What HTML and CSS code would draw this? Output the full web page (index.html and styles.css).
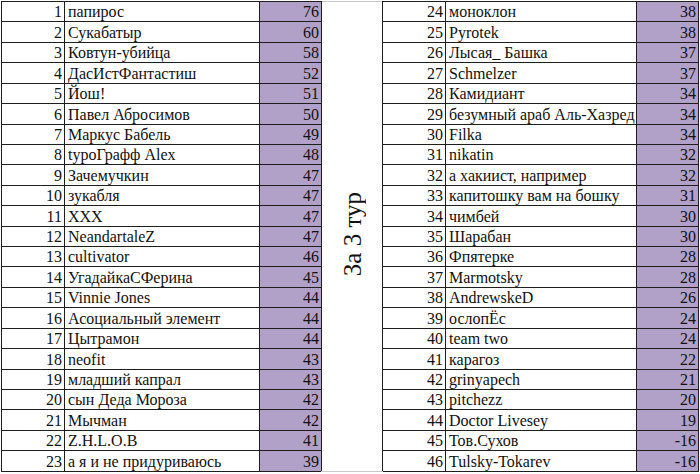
FILE: index.html
```html
<!DOCTYPE html>
<html lang="ru">
<head>
<meta charset="utf-8">
<link rel="stylesheet" href="styles.css">
</head>
<body>
<div class="sheet">
<table class="grid">
<colgroup>
<col class="c-num"><col class="c-name-l"><col class="c-score">
<col class="c-mid">
<col class="c-num"><col class="c-name-r"><col class="c-score">
</colgroup>
<tbody>
<tr><td class="num">1</td><td class="name">папирос</td><td class="score">76</td><td class="mid" rowspan="23"><span class="mid-text">За 3 тур</span></td><td class="num">24</td><td class="name">моноклон</td><td class="score">38</td></tr>
<tr><td class="num">2</td><td class="name">Сукабатыр</td><td class="score">60</td><td class="num">25</td><td class="name">Pyrotek</td><td class="score">38</td></tr>
<tr><td class="num">3</td><td class="name">Ковтун-убийца</td><td class="score">58</td><td class="num">26</td><td class="name">Лысая_ Башка</td><td class="score">37</td></tr>
<tr><td class="num">4</td><td class="name">ДасИстФантастиш</td><td class="score">52</td><td class="num">27</td><td class="name">Schmelzer</td><td class="score">37</td></tr>
<tr><td class="num">5</td><td class="name">Йош!</td><td class="score">51</td><td class="num">28</td><td class="name">Камидиант</td><td class="score">34</td></tr>
<tr><td class="num">6</td><td class="name">Павел Абросимов</td><td class="score">50</td><td class="num">29</td><td class="name">безумный араб Аль-Хазред</td><td class="score">34</td></tr>
<tr><td class="num">7</td><td class="name">Маркус Бабель</td><td class="score">49</td><td class="num">30</td><td class="name">Filka</td><td class="score">34</td></tr>
<tr><td class="num">8</td><td class="name">typoГрафф Alex</td><td class="score">48</td><td class="num">31</td><td class="name">nikatin</td><td class="score">32</td></tr>
<tr><td class="num">9</td><td class="name">Зачемучкин</td><td class="score">47</td><td class="num">32</td><td class="name">а хакиист, например</td><td class="score">32</td></tr>
<tr><td class="num">10</td><td class="name">зукабля</td><td class="score">47</td><td class="num">33</td><td class="name">капитошку вам на бошку</td><td class="score">31</td></tr>
<tr><td class="num">11</td><td class="name">XXX</td><td class="score">47</td><td class="num">34</td><td class="name">чимбей</td><td class="score">30</td></tr>
<tr><td class="num">12</td><td class="name">NeandartaleZ</td><td class="score">47</td><td class="num">35</td><td class="name">Шарабан</td><td class="score">30</td></tr>
<tr><td class="num">13</td><td class="name">cultivator</td><td class="score">46</td><td class="num">36</td><td class="name">Фпятерке</td><td class="score">28</td></tr>
<tr><td class="num">14</td><td class="name">УгадайкаСФерина</td><td class="score">45</td><td class="num">37</td><td class="name">Marmotsky</td><td class="score">28</td></tr>
<tr><td class="num">15</td><td class="name">Vinnie Jones</td><td class="score">44</td><td class="num">38</td><td class="name">AndrewskeD</td><td class="score">26</td></tr>
<tr><td class="num">16</td><td class="name">Асоциальный элемент</td><td class="score">44</td><td class="num">39</td><td class="name">ослопЁс</td><td class="score">24</td></tr>
<tr><td class="num">17</td><td class="name">Цытрамон</td><td class="score">44</td><td class="num">40</td><td class="name">team two</td><td class="score">24</td></tr>
<tr><td class="num">18</td><td class="name">neofit</td><td class="score">43</td><td class="num">41</td><td class="name">карагоз</td><td class="score">22</td></tr>
<tr><td class="num">19</td><td class="name">младший капрал</td><td class="score">43</td><td class="num">42</td><td class="name">grinyapech</td><td class="score">21</td></tr>
<tr><td class="num">20</td><td class="name">сын Деда Мороза</td><td class="score">42</td><td class="num">43</td><td class="name">pitchezz</td><td class="score">20</td></tr>
<tr><td class="num">21</td><td class="name">Мычман</td><td class="score">42</td><td class="num">44</td><td class="name">Doctor Livesey</td><td class="score">19</td></tr>
<tr><td class="num">22</td><td class="name">Z.H.L.O.B</td><td class="score">41</td><td class="num">45</td><td class="name">Тов.Сухов</td><td class="score">-16</td></tr>
<tr><td class="num">23</td><td class="name">а я и не придуриваюсь</td><td class="score">39</td><td class="num">46</td><td class="name">Tulsky-Tokarev</td><td class="score">-16</td></tr>
</tbody>
</table>
</div>
</body>
</html>
```

FILE: styles.css
```css
html, body {
  margin: 0;
  padding: 0;
  background: #ffffff;
}

.sheet {
  padding: 1px 0 0 1px;
}

.grid {
  border-collapse: collapse;
  table-layout: fixed;
  width: 696px;
  font-family: "Liberation Serif", "Times New Roman", serif;
  font-size: 16px;
  color: #111;
}

.c-num { width: 63px; }
.c-name-l { width: 195px; }
.c-name-r { width: 191px; }
.c-score { width: 62px; }
.c-mid { width: 61px; }

.grid td {
  border: 1px solid #1e1e1e;
  height: 19.43px;
  padding: 0 2px 0 3px;
  line-height: 18px;
  vertical-align: bottom;
  white-space: nowrap;
  overflow: hidden;
}

.grid td.num {
  text-align: right;
  padding-right: 2px;
}

.grid td.name {
  text-align: left;
}

.grid td.score {
  text-align: right;
  background: #b1a0c7;
  padding-right: 2px;
}

.grid td.mid {
  border-top-color: #c8c8c8;
  border-bottom-color: #c8c8c8;
  vertical-align: middle;
  text-align: center;
  padding: 0;
}

.mid-text {
  display: inline-block;
  writing-mode: vertical-rl;
  transform: rotate(180deg);
  font-size: 25px;
  line-height: 25px;
}
```
